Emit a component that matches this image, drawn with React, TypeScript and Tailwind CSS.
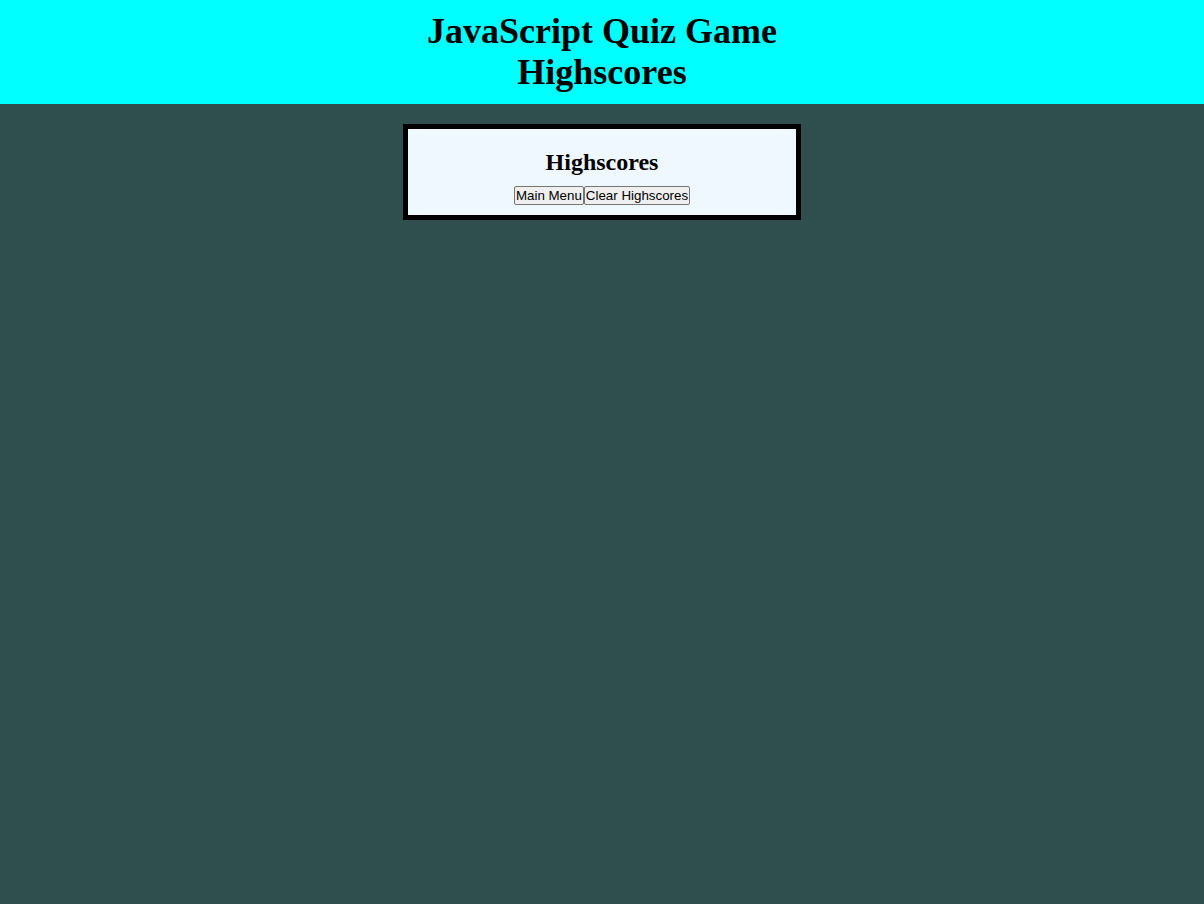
const App = () => {
  return (
    <div className="min-h-[904px] bg-[#2f4f4f] font-['Liberation_Serif',serif] text-black">
      <header className="bg-[#00ffff] h-[104px] pt-[11px] text-center">
        <h1 className="text-[36px] font-bold leading-[41px]">
          JavaScript Quiz Game
          <br />
          Highscores
        </h1>
      </header>

      <div className="flex justify-center pt-[20px]">
        <div className="w-[398px] h-[96px] border-[5px] border-black bg-[#f0f8ff] flex flex-col items-center pt-[19px]">
          <h2 className="text-[24px] font-bold leading-[28px]">Highscores</h2>
          <div className="flex mt-[10px]">
            <button className="h-[19px] font-['Liberation_Sans',sans-serif] text-[13.33px] leading-[17px] px-[1px] bg-[#efefef] border border-[#767676] rounded-[2px]">
              Main Menu
            </button>
            <button className="h-[19px] font-['Liberation_Sans',sans-serif] text-[13.33px] leading-[17px] px-[1px] bg-[#efefef] border border-[#767676] rounded-[2px]">
              Clear Highscores
            </button>
          </div>
        </div>
      </div>
    </div>
  );
};

export default App;
